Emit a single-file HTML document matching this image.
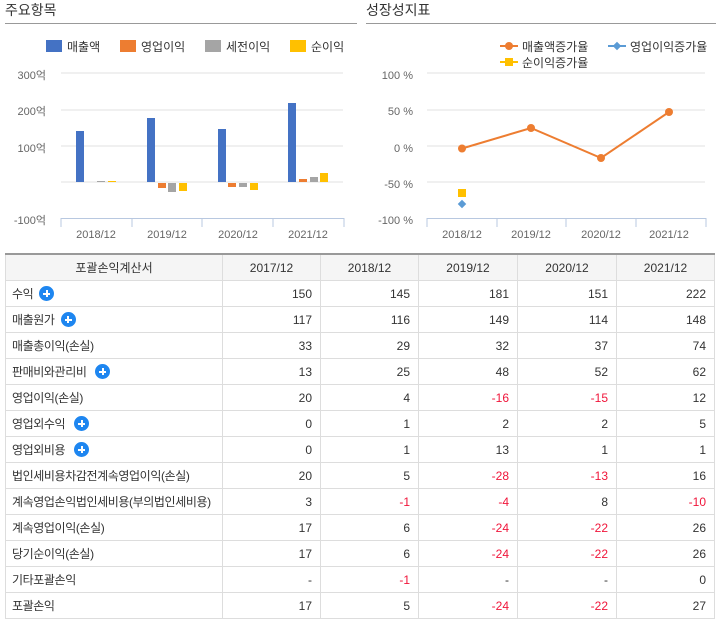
<!DOCTYPE html>
<html><head><meta charset="utf-8"><style>
body{margin:0;width:716px;height:624px;background:#fff;font-family:"Liberation Sans","Noto Sans CJK KR",sans-serif;color:#333;position:relative;overflow:hidden}
.t{position:absolute;font-size:14px;color:#333}
.hr{position:absolute;height:1px;background:#999}
table{position:absolute;left:5px;top:253px;border-collapse:collapse;font-size:12px;table-layout:fixed}
td,th{border:1px solid #ddd;height:25px;padding:0 8px;text-align:right;font-weight:normal;color:#333;white-space:nowrap;overflow:hidden}
th{background:#f5f5f5;text-align:center;border-top:2px solid #999}
td:first-child{text-align:left;padding-left:6px;letter-spacing:-0.4px}
.r{color:#f0153a}
.p{display:inline-block;width:15px;height:15px;border-radius:50%;background:#1e86f0;color:#fff;vertical-align:middle;position:relative;margin-left:6px;top:-1px}
.p:before{content:"";position:absolute;left:4px;top:6.5px;width:7px;height:2px;background:#fff}
.p:after{content:"";position:absolute;left:6.5px;top:4px;width:2px;height:7px;background:#fff}
svg text{font-family:"Liberation Sans","Noto Sans CJK KR",sans-serif}
</style></head><body>
<div class="t" style="left:5px;top:0px">주요항목</div>
<div class="hr" style="left:5px;top:23px;width:352px"></div>
<div class="t" style="left:366px;top:0px">성장성지표</div>
<div class="hr" style="left:366px;top:23px;width:350px"></div>
<svg width="716" height="250" style="position:absolute;left:0;top:0">
<g fill="#666" font-size="11">
<rect x="46" y="40" width="16" height="12" fill="#4472c4"/><text x="67" y="51" font-size="12" fill="#333">매출액</text>
<rect x="120" y="40" width="16" height="12" fill="#ed7d31"/><text x="141" y="51" font-size="12" fill="#333">영업이익</text>
<rect x="205" y="40" width="16" height="12" fill="#a5a5a5"/><text x="226" y="51" font-size="12" fill="#333">세전이익</text>
<rect x="290" y="40" width="16" height="12" fill="#ffc000"/><text x="311" y="51" font-size="12" fill="#333">순이익</text>
<g stroke="#e0e0e0"><line x1="61" x2="343" y1="73" y2="73"/><line x1="61" x2="343" y1="110" y2="110"/><line x1="61" x2="343" y1="146" y2="146"/><line x1="61" x2="343" y1="182" y2="182"/></g>
<g stroke="#b8c8e0"><line x1="61" x2="344" y1="218.5" y2="218.5"/><line x1="61" x2="61" y1="218" y2="227"/><line x1="132" x2="132" y1="218" y2="227"/><line x1="202" x2="202" y1="218" y2="227"/><line x1="273" x2="273" y1="218" y2="227"/><line x1="344" x2="344" y1="218" y2="227"/></g>
<text x="46" y="79" text-anchor="end">300억</text><text x="46" y="115" text-anchor="end">200억</text><text x="46" y="152" text-anchor="end">100억</text><text x="46" y="224" text-anchor="end">-100억</text>
<text x="96" y="238" text-anchor="middle">2018/12</text><text x="167" y="238" text-anchor="middle">2019/12</text><text x="238" y="238" text-anchor="middle">2020/12</text><text x="308" y="238" text-anchor="middle">2021/12</text>
<rect x="76" y="131" width="8" height="51" fill="#4472c4"/><rect x="97" y="181" width="8" height="1" fill="#a5a5a5"/><rect x="108" y="181" width="8" height="1" fill="#ffc000"/>
<rect x="147" y="118" width="8" height="64" fill="#4472c4"/><rect x="158" y="183" width="8" height="5" fill="#ed7d31"/><rect x="168" y="183" width="8" height="9" fill="#a5a5a5"/><rect x="179" y="183" width="8" height="8" fill="#ffc000"/>
<rect x="218" y="129" width="8" height="53" fill="#4472c4"/><rect x="228" y="183" width="8" height="4" fill="#ed7d31"/><rect x="239" y="183" width="8" height="4" fill="#a5a5a5"/><rect x="250" y="183" width="8" height="7" fill="#ffc000"/>
<rect x="288" y="103" width="8" height="79" fill="#4472c4"/><rect x="299" y="179" width="8" height="3" fill="#ed7d31"/><rect x="310" y="177" width="8" height="5" fill="#a5a5a5"/><rect x="320" y="173" width="8" height="9" fill="#ffc000"/>

<line x1="500" x2="518" y1="46" y2="46" stroke="#ed7d31" stroke-width="2"/><circle cx="509" cy="46" r="4" fill="#ed7d31"/><text x="522" y="51" font-size="12" fill="#333">매출액증가율</text>
<line x1="608" x2="626" y1="46" y2="46" stroke="#5b9bd5" stroke-width="2"/><rect x="614" y="43" width="6" height="6" fill="#5b9bd5" transform="rotate(45 617 46)"/><text x="630" y="51" font-size="12" fill="#333">영업이익증가율</text>
<line x1="500" x2="518" y1="62" y2="62" stroke="#ffc000" stroke-width="2"/><rect x="505" y="58" width="8" height="8" fill="#ffc000"/><text x="522" y="67" font-size="12" fill="#333">순이익증가율</text>
<g stroke="#e0e0e0"><line x1="427" x2="705" y1="73" y2="73"/><line x1="427" x2="705" y1="110" y2="110"/><line x1="427" x2="705" y1="146" y2="146"/><line x1="427" x2="705" y1="182" y2="182"/></g>
<g stroke="#b8c8e0"><line x1="427" x2="706" y1="218.5" y2="218.5"/><line x1="427" x2="427" y1="218" y2="227"/><line x1="497" x2="497" y1="218" y2="227"/><line x1="566" x2="566" y1="218" y2="227"/><line x1="636" x2="636" y1="218" y2="227"/><line x1="706" x2="706" y1="218" y2="227"/></g>
<text x="413" y="79" text-anchor="end">100 %</text><text x="413" y="115" text-anchor="end">50 %</text><text x="413" y="152" text-anchor="end">0 %</text><text x="413" y="188" text-anchor="end">-50 %</text><text x="413" y="224" text-anchor="end">-100 %</text>
<text x="462" y="238" text-anchor="middle">2018/12</text><text x="531" y="238" text-anchor="middle">2019/12</text><text x="601" y="238" text-anchor="middle">2020/12</text><text x="669" y="238" text-anchor="middle">2021/12</text>
<polyline points="462,148.5 531,128 601,158 669,112" fill="none" stroke="#ed7d31" stroke-width="2"/>
<g fill="#ed7d31"><circle cx="462" cy="148.5" r="4"/><circle cx="531" cy="128" r="4"/><circle cx="601" cy="158" r="4"/><circle cx="669" cy="112" r="4"/></g>
<rect x="458" y="189" width="8" height="8" fill="#ffc000"/>
<rect x="459" y="201" width="6" height="6" fill="#5b9bd5" transform="rotate(45 462 204)"/>
</g></svg>
<table>
<colgroup><col style="width:217px"><col style="width:98px"><col style="width:98px"><col style="width:99px"><col style="width:99px"><col style="width:98px"></colgroup>
<tr><th>포괄손익계산서</th><th>2017/12</th><th>2018/12</th><th>2019/12</th><th>2020/12</th><th>2021/12</th></tr>
<tr><td>수익<span class="p"></span></td><td>150</td><td>145</td><td>181</td><td>151</td><td>222</td></tr>
<tr><td>매출원가<span class="p"></span></td><td>117</td><td>116</td><td>149</td><td>114</td><td>148</td></tr>
<tr><td>매출총이익(손실)</td><td>33</td><td>29</td><td>32</td><td>37</td><td>74</td></tr>
<tr><td>판매비와관리비 <span class="p"></span></td><td>13</td><td>25</td><td>48</td><td>52</td><td>62</td></tr>
<tr><td>영업이익(손실)</td><td>20</td><td>4</td><td class="r">-16</td><td class="r">-15</td><td>12</td></tr>
<tr><td>영업외수익 <span class="p"></span></td><td>0</td><td>1</td><td>2</td><td>2</td><td>5</td></tr>
<tr><td>영업외비용 <span class="p"></span></td><td>0</td><td>1</td><td>13</td><td>1</td><td>1</td></tr>
<tr><td>법인세비용차감전계속영업이익(손실)</td><td>20</td><td>5</td><td class="r">-28</td><td class="r">-13</td><td>16</td></tr>
<tr><td>계속영업손익법인세비용(부의법인세비용)</td><td>3</td><td class="r">-1</td><td class="r">-4</td><td>8</td><td class="r">-10</td></tr>
<tr><td>계속영업이익(손실)</td><td>17</td><td>6</td><td class="r">-24</td><td class="r">-22</td><td>26</td></tr>
<tr><td>당기순이익(손실)</td><td>17</td><td>6</td><td class="r">-24</td><td class="r">-22</td><td>26</td></tr>
<tr><td>기타포괄손익</td><td>-</td><td class="r">-1</td><td>-</td><td>-</td><td>0</td></tr>
<tr><td>포괄손익</td><td>17</td><td>5</td><td class="r">-24</td><td class="r">-22</td><td>27</td></tr>
</table>
</body></html>
